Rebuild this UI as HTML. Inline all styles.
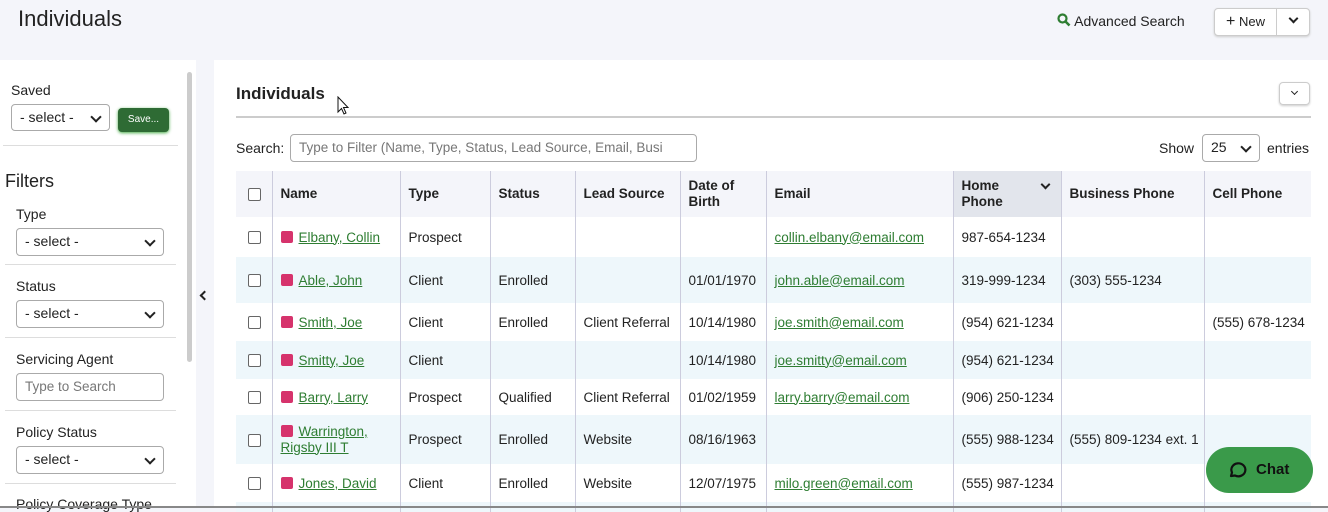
<!DOCTYPE html>
<html><head><meta charset="utf-8"><style>
*{box-sizing:border-box}
body{margin:0;width:1328px;height:508px;overflow:hidden;background:#f4f5fa;font-family:"Liberation Sans",sans-serif;color:#222;font-size:14px;position:relative}
.abs{position:absolute}
h1{position:absolute;left:18px;top:6px;margin:0;font-weight:400;font-size:22px;color:#222}
.sel,.inp{position:absolute;border:1px solid #aaa;border-radius:4px;background:#fff;font-size:14px;padding:4px 8px;color:#222}
.sel:after{content:"";position:absolute;right:9px;top:8px;width:6px;height:6px;border-right:2px solid #222;border-bottom:2px solid #222;transform:rotate(45deg)}
.lbl{position:absolute;font-size:14px;color:#222}
.hr{position:absolute;height:1px;background:#ddd}
table{position:absolute;left:236px;top:171px;border-collapse:collapse;table-layout:fixed;width:1075px}
td,th{padding:0 8px;text-align:left;font-size:13.5px;border-left:1px solid #ccd;vertical-align:middle;white-space:nowrap;overflow:hidden}
th{font-weight:700;background:#f4f5fa;height:46px;line-height:16px}
tr td:first-child,tr th:first-child{border-left:none}
tr.s td{background:#eef7fb}
a{color:#2e7d32;text-decoration:underline}
.cb{display:inline-block;width:13px;height:13px;border:1px solid #666;border-radius:2px;background:#fff;vertical-align:middle;margin-left:4px}
.sq{display:inline-block;width:12px;height:12px;background:#d6336c;border-radius:2px;margin-right:6px;vertical-align:-1px}
</style></head><body>
<h1>Individuals</h1>
<div class="abs" style="left:1057px;top:13px;font-size:14px;color:#222"><svg width="14" height="14" viewBox="0 0 14 14" style="vertical-align:-1px"><circle cx="5.5" cy="5.5" r="4" stroke="#2e7d32" stroke-width="2.2" fill="none"/><path d="M8.5 8.5L12.5 12.5" stroke="#2e7d32" stroke-width="2.6"/></svg> Advanced Search</div>
<div class="abs" style="left:1214px;top:8px;width:96px;height:28px;border:1px solid #ccc;border-radius:4px;background:#fff;box-shadow:0 1px 2px #ccc"></div>
<div class="abs" style="left:1276px;top:9px;width:1px;height:26px;background:#ccc"></div>
<div class="abs" style="left:1226px;top:13px;font-size:13px"><b style="font-size:16px;font-weight:400">+</b> New</div>
<div class="abs" style="left:1290px;top:15px;width:7px;height:7px;border-right:2px solid #222;border-bottom:2px solid #222;transform:rotate(45deg)"></div>

<div class="abs" style="left:0;top:60px;width:196px;height:448px;background:#fff"></div>
<div class="abs" style="left:196px;top:60px;width:18px;height:448px;background:#f4f5fa"></div>
<div class="abs" style="left:187px;top:72px;width:5px;height:290px;background:#ccc;border-radius:3px"></div>
<div class="abs" style="left:201px;top:292px;width:7px;height:7px;border-left:2px solid #222;border-bottom:2px solid #222;transform:rotate(45deg)"></div>
<div class="lbl" style="left:11px;top:82px">Saved</div>
<div class="sel" style="left:11px;top:104px;width:99px;height:27px">- select -</div>
<div class="abs" style="left:118px;top:108px;width:51px;height:24px;background:#2e6b34;border-radius:4px;color:#fff;font-size:10px;text-align:center;line-height:24px;box-shadow:0 1px 3px #4a4">Save...</div>
<div class="hr" style="left:3px;top:145px;width:175px"></div>
<div class="lbl" style="left:5px;top:171px;font-size:18px">Filters</div>
<div class="lbl" style="left:16px;top:206px">Type</div>
<div class="sel" style="left:16px;top:228px;width:148px;height:28px">- select -</div>
<div class="hr" style="left:5px;top:264px;width:171px"></div>
<div class="lbl" style="left:16px;top:278px">Status</div>
<div class="sel" style="left:16px;top:300px;width:148px;height:28px">- select -</div>
<div class="hr" style="left:5px;top:337px;width:171px"></div>
<div class="lbl" style="left:16px;top:351px">Servicing Agent</div>
<div class="inp" style="left:16px;top:373px;width:148px;height:28px;color:#777;font-size:13.5px;padding-top:5px">Type to Search</div>
<div class="hr" style="left:5px;top:410px;width:171px"></div>
<div class="lbl" style="left:16px;top:424px">Policy Status</div>
<div class="sel" style="left:16px;top:446px;width:148px;height:28px">- select -</div>
<div class="hr" style="left:5px;top:483px;width:171px"></div>
<div class="lbl" style="left:16px;top:496px">Policy Coverage Type</div>

<div class="abs" style="left:214px;top:60px;width:1114px;height:448px;background:#fff"></div>
<div class="abs" style="left:236px;top:84px;font-size:17px;font-weight:700">Individuals</div>
<svg class="abs" style="left:337px;top:96px" width="14" height="20" viewBox="0 0 14 20"><path d="M1 1 L1 16 L4.5 12.5 L7 18 L9 17 L6.5 11.5 L11 11.5 Z" fill="#fff" stroke="#111" stroke-width="1"/></svg>
<div class="abs" style="left:1279px;top:82px;width:31px;height:23px;border:1px solid #ccc;border-radius:4px;box-shadow:0 1px 2px #ccc"></div>
<div class="abs" style="left:1292px;top:89px;width:5px;height:5px;border-right:1.5px solid #222;border-bottom:1.5px solid #222;transform:rotate(45deg)"></div>
<div class="abs" style="left:236px;top:116px;width:1075px;height:2px;background:#ccc"></div>
<div class="lbl" style="left:236px;top:140px">Search:</div>
<div class="inp" style="left:290px;top:134px;width:407px;height:28px;color:#777;font-size:13.5px;white-space:nowrap;overflow:hidden;padding-top:5px">Type to Filter (Name, Type, Status, Lead Source, Email, Busi</div>
<div class="lbl" style="left:1159px;top:140px">Show</div>
<div class="sel" style="left:1202px;top:134px;width:58px;height:28px">25</div>
<div class="lbl" style="left:1267px;top:140px">entries</div>

<table>
<colgroup><col style="width:36px"><col style="width:128px"><col style="width:90px"><col style="width:85px"><col style="width:105px"><col style="width:86px"><col style="width:187px"><col style="width:108px"><col style="width:143px"><col style="width:107px"></colgroup>
<tr><th><span class="cb"></span></th><th>Name</th><th>Type</th><th>Status</th><th>Lead Source</th><th>Date of<br>Birth</th><th>Email</th><th style="background:#e2e5ec;position:relative">Home<br>Phone<span style="position:absolute;right:12px;top:10px;width:7px;height:7px;border-right:2px solid #222;border-bottom:2px solid #222;transform:rotate(45deg)"></span></th><th>Business Phone</th><th>Cell Phone</th></tr>
<tr style="height:40px"><td><span class="cb"></span></td><td><span class="sq"></span><a>Elbany, Collin</a></td><td>Prospect</td><td></td><td></td><td></td><td><a>collin.elbany@email.com</a></td><td>987-654-1234</td><td></td><td></td></tr>
<tr class="s" style="height:46px"><td><span class="cb"></span></td><td><span class="sq"></span><a>Able, John</a></td><td>Client</td><td>Enrolled</td><td></td><td>01/01/1970</td><td><a>john.able@email.com</a></td><td>319-999-1234</td><td>(303) 555-1234</td><td></td></tr>
<tr style="height:38px"><td><span class="cb"></span></td><td><span class="sq"></span><a>Smith, Joe</a></td><td>Client</td><td>Enrolled</td><td>Client Referral</td><td>10/14/1980</td><td><a>joe.smith@email.com</a></td><td>(954) 621-1234</td><td></td><td>(555) 678-1234</td></tr>
<tr class="s" style="height:38px"><td><span class="cb"></span></td><td><span class="sq"></span><a>Smitty, Joe</a></td><td>Client</td><td></td><td></td><td>10/14/1980</td><td><a>joe.smitty@email.com</a></td><td>(954) 621-1234</td><td></td><td></td></tr>
<tr style="height:36px"><td><span class="cb"></span></td><td><span class="sq"></span><a>Barry, Larry</a></td><td>Prospect</td><td>Qualified</td><td>Client Referral</td><td>01/02/1959</td><td><a>larry.barry@email.com</a></td><td>(906) 250-1234</td><td></td><td></td></tr>
<tr class="s" style="height:49px"><td><span class="cb"></span></td><td style="line-height:16px"><span class="sq"></span><a>Warrington,<br>Rigsby III T</a></td><td>Prospect</td><td>Enrolled</td><td>Website</td><td>08/16/1963</td><td></td><td>(555) 988-1234</td><td>(555) 809-1234 ext. 1</td><td></td></tr>
<tr style="height:38px"><td><span class="cb"></span></td><td><span class="sq"></span><a>Jones, David</a></td><td>Client</td><td>Enrolled</td><td>Website</td><td>12/07/1975</td><td><a>milo.green@email.com</a></td><td>(555) 987-1234</td><td></td><td></td></tr>
<tr class="s" style="height:10px"><td></td><td></td><td></td><td></td><td></td><td></td><td></td><td></td><td></td><td></td></tr>
</table>
<div class="abs" style="left:1206px;top:447px;width:107px;height:46px;border-radius:23px;background:#3a9a4a;color:#111;font-weight:700;font-size:15px;line-height:46px;padding-left:50px">Chat</div>
<svg class="abs" style="left:1226px;top:459px" width="22" height="22" viewBox="0 0 22 22"><path d="M5 17 L6 13.5 A7 6.5 0 1 1 9 16.5 Z" fill="none" stroke="#111" stroke-width="2.2" stroke-linejoin="round"/></svg>
<div class="abs" style="left:0;top:506px;width:1328px;height:2px;background:#888"></div>
</body></html>
